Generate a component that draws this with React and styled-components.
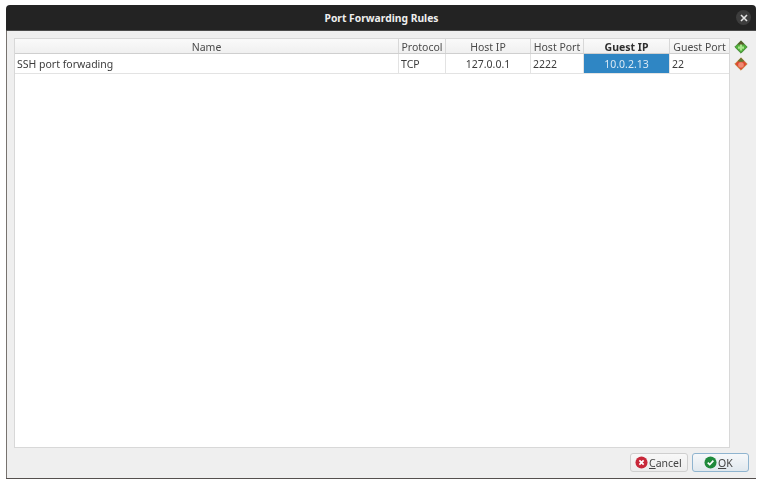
import React from "react"
import styled, { createGlobalStyle } from "styled-components"

const columns = [
  { name: "Name", width: 384 },
  { name: "Protocol", width: 47 },
  { name: "Host IP", width: 85 },
  { name: "Host Port", width: 53 },
  { name: "Guest IP", width: 86, current: true },
  { name: "Guest Port", width: 59 },
]

const cells = [
  { text: "SSH port forwading" },
  { text: "TCP" },
  { text: "127.0.0.1", center: true },
  { text: "2222" },
  { text: "10.0.2.13", center: true, selected: true },
  { text: "22" },
]

const Global = createGlobalStyle`
  html, body {
    margin: 0;
    background: #fff;
  }
  body {
    font-family: "Noto Sans", "Open Sans", sans-serif;
  }
`

function AddIcon() {
  return (
    <svg width="14" height="14" viewBox="0 0 14 14">
      <path d="M7 0.8 L13.2 7 L7 13.2 L0.8 7 Z" fill="#4fae3a" stroke="#3f7d2e" strokeWidth="0.8" strokeLinejoin="round" />
      <path d="M7 0.8 L10.4 4.2 L7 5 L3.6 4.2 Z" fill="#5c5a2c" />
      <path d="M7 4.6 V10.6 M4 7.6 H10" stroke="#a8e58a" strokeWidth="2.2" />
    </svg>
  )
}

function RemoveIcon() {
  return (
    <svg width="14" height="14" viewBox="0 0 14 14">
      <path d="M7 0.8 L13.2 7 L7 13.2 L0.8 7 Z" fill="#de4b32" stroke="#c08a3a" strokeWidth="0.8" strokeLinejoin="round" />
      <path d="M7 0.8 L10.4 4.2 L7 5 L3.6 4.2 Z" fill="#5f7a34" />
      <circle cx="7" cy="8" r="2.8" fill="#f08a72" />
    </svg>
  )
}

function Main() {
  return (
    <Page>
      <Global />
      <Window>
        <TitleBar>
          <Title>Port Forwarding Rules</Title>
          <CloseButton>
            <svg width="8" height="8" viewBox="0 0 8 8">
              <path d="M1 1 L7 7 M7 1 L1 7" stroke="#e4e4e4" strokeWidth="1.6" />
            </svg>
          </CloseButton>
        </TitleBar>
        <Body>
          <Content>
            <Table>
              <HeaderRow>
                {columns.map(col => (
                  <HeaderCell key={col.name} $width={col.width} $current={col.current}>
                    {col.name}
                  </HeaderCell>
                ))}
              </HeaderRow>
              <Row>
                {cells.map((cell, i) => (
                  <Cell key={cell.text} $width={columns[i].width} $center={cell.center} $selected={cell.selected}>
                    {cell.text}
                  </Cell>
                ))}
              </Row>
            </Table>
            <SideTools>
              <AddIcon />
              <RemoveIcon />
            </SideTools>
          </Content>
          <Footer>
            <Button $width={58} $inset={4}>
              <svg width="13" height="13" viewBox="0 0 14 14">
                <circle cx="7" cy="7" r="6.5" fill="#c8283a" />
                <path d="M4.7 4.7 L9.3 9.3 M9.3 4.7 L4.7 9.3" stroke="#fff" strokeWidth="1.8" />
              </svg>
              <span><u>C</u>ancel</span>
            </Button>
            <Button $width={57} $inset={11} $primary>
              <svg width="13" height="13" viewBox="0 0 14 14">
                <circle cx="7" cy="7" r="6.5" fill="#1f8a3c" />
                <path d="M4 7.1 L6.2 9.3 L10.1 5" stroke="#fff" strokeWidth="1.8" fill="none" />
              </svg>
              <span><u>O</u>K</span>
            </Button>
          </Footer>
        </Body>
      </Window>
    </Page>
  )
}

export default Main

const Page = styled.div`
  width: 771px;
  height: 483px;
  box-sizing: border-box;
  padding: 5px 15px 5px 6px;
  overflow: hidden;
`

const Window = styled.div`
  height: 473px;
  display: flex;
  flex-direction: column;
  border-radius: 4px 4px 0 0;
  overflow: hidden;
  border-bottom: 1px solid #55504e;
  filter: blur(0.3px);
`

const TitleBar = styled.div`
  height: 25px;
  flex: none;
  display: flex;
  align-items: center;
  justify-content: center;
  position: relative;
  background: #232323;
  border-bottom: 1px solid #4a4a4a;
`

const Title = styled.div`
  color: #eeeeee;
  font-size: 10.3px;
  font-weight: 700;
  padding-left: 1px;
`

const CloseButton = styled.div`
  position: absolute;
  right: 5px;
  top: 5px;
  width: 15px;
  height: 15px;
  border-radius: 50%;
  background: #3d3d3d;
  display: flex;
  align-items: center;
  justify-content: center;
`

const Body = styled.div`
  flex: 1;
  min-height: 0;
  display: flex;
  flex-direction: column;
  background: #efefef;
  border-left: 1px solid #77736f;
  padding: 7px 0 0 7px;
`

const Content = styled.div`
  flex: 1;
  min-height: 0;
  display: flex;
`

const Table = styled.div`
  width: 716px;
  height: 410px;
  box-sizing: border-box;
  background: #fff;
  border: 1px solid #d8d8d8;
`

const HeaderRow = styled.div`
  display: flex;
  height: 14px;
  background: linear-gradient(#fafafa, #f0f0f0);
  border-bottom: 1px solid #cfcfcf;
`

const HeaderCell = styled.div`
  width: ${p => p.$width}px;
  flex: none;
  box-sizing: border-box;
  border-right: 1px solid #d8d8d8;
  text-align: center;
  font-size: 10.5px;
  line-height: 16px;
  white-space: nowrap;
  overflow: hidden;
  color: ${p => (p.$current ? "#2e2e2e" : "#4a4a4a")};
  font-weight: ${p => (p.$current ? 700 : 400)};
  &:last-child {
    border-right: none;
  }
`

const Row = styled.div`
  display: flex;
  height: 19px;
  border-bottom: 1px solid #e3e3e3;
`

const Cell = styled.div`
  width: ${p => p.$width}px;
  flex: none;
  box-sizing: border-box;
  padding: 0 2px;
  border-right: 1px solid #e3e3e3;
  text-align: ${p => (p.$center ? "center" : "left")};
  font-size: 10.5px;
  line-height: 20px;
  white-space: nowrap;
  color: ${p => (p.$selected ? "#dbe9f4" : "#3c3c3c")};
  background: ${p => (p.$selected ? "#2f86c4" : "transparent")};
  &:last-child {
    border-right: none;
  }
`

const SideTools = styled.div`
  display: flex;
  flex-direction: column;
  gap: 3px;
  padding: 2px 0 0 4px;
`

const Footer = styled.div`
  flex: none;
  height: 29px;
  display: flex;
  justify-content: flex-end;
  align-items: flex-start;
  gap: 4px;
  padding: 4px 7px 0 0;
  box-sizing: border-box;
`

const Button = styled.div`
  width: ${p => p.$width}px;
  height: 19px;
  box-sizing: border-box;
  display: flex;
  align-items: center;
  gap: 1px;
  padding-left: ${p => p.$inset}px;
  border-radius: 3px;
  border: 1px solid ${p => (p.$primary ? "#8fb4cf" : "#cfcfcf")};
  background: ${p => (p.$primary ? "linear-gradient(#f6f8fa, #e0e8ee)" : "linear-gradient(#f8f8f8, #ececec)")};
  color: #444;
  font-size: 10.5px;
`
